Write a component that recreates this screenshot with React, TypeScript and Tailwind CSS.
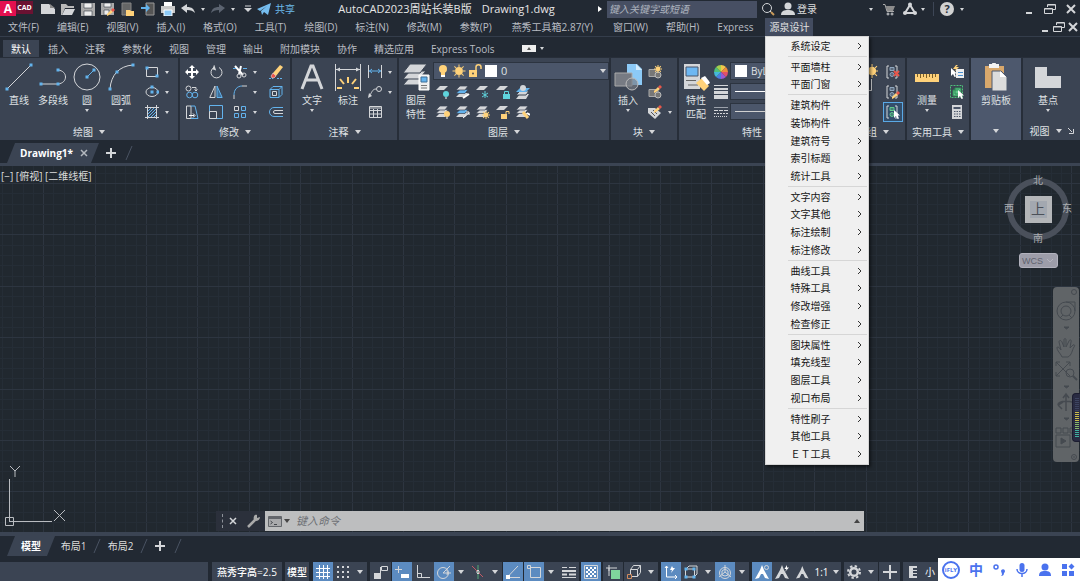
import type { ReactNode } from 'react';
import clsx from 'clsx';

const G = '#d4d6d9';
const B = '#63b3ed';
const Y = '#ffd27a';

interface IconProps {
  w?: number;
  h?: number;
  children: ReactNode;
}

function Icon({ w = 14, h = 14, children }: IconProps) {
  return (
    <svg width={w} height={h} viewBox={`0 0 ${w} ${h}`} fill="none" stroke={G} className="block shrink-0" aria-hidden="true">
      {children}
    </svg>
  );
}

function Caret({ big = false }: { big?: boolean }) {
  return big ? (
    <Icon w={6} h={4}><path d="M0 0h6L3 4z" fill={G} stroke="none" /></Icon>
  ) : (
    <Icon w={4} h={3}><path d="M0 0h4L2 3z" fill={G} stroke="none" /></Icon>
  );
}

function Tool({ label, children, className }: { label: string; children: ReactNode; className?: string }) {
  return (
    <button type="button" aria-label={label} className={clsx('flex items-center justify-center shrink-0', className || 'w-5 h-5')}>
      {children}
    </button>
  );
}

function BigTool({ lines, icon, caret, className }: { lines: string[]; icon: ReactNode; caret?: boolean; className?: string }) {
  return (
    <button type="button" className={clsx('flex flex-col items-center shrink-0 pt-px whitespace-nowrap', className || 'w-[34px]')}>
      <span className="h-7 mb-0.5 flex items-start">{icon}</span>
      {lines.map((l) => <span key={l} className="leading-[14px]">{l}</span>)}
      {caret && <span className="pt-0.5"><Caret /></span>}
    </button>
  );
}

function Panel({ title, children, className, extra }: { title: string; children: ReactNode; className: string; extra?: ReactNode }) {
  return (
    <section className={clsx('flex flex-col pt-1', className)}>
      <div className="flex h-[60px]">{children}</div>
      <button type="button" aria-label={title || '剪贴板面板'} className="flex items-center justify-center gap-1.5 pt-px h-[19px] leading-4">
        {title}
        <Caret big />
        {extra}
      </button>
    </section>
  );
}

/* ---------- shared drawing parts ---------- */

function Sheets({ mid = G }: { mid?: string }) {
  return (
    <g stroke="none">
      <path d="M4 8h8l-3 4H0z" fill={G} />
      <path d="M4 4.500h8l-3 4H0z" fill={mid} stroke="#3b4453" strokeWidth=".7" />
      <path d="M4 1h8L9 5H0z" fill={G} stroke="#3b4453" strokeWidth=".7" />
    </g>
  );
}

const Sheet = () => <path d="M4 1h8L8 5H0z" fill={G} stroke="none" />;

function Sun({ x, y, r }: { x: number; y: number; r: number }) {
  return (
    <g transform={`translate(${x} ${y})`} stroke={Y}>
      <circle r={r * 0.6} fill={Y} stroke="none" />
      {[0, 45, 90, 135, 180, 225, 270, 315].map((a) => (
        <path key={a} d={`M0 ${-r * 0.6}V${-r}`} transform={`rotate(${a})`} />
      ))}
    </g>
  );
}

const Pencil = ({ x, y }: { x: number; y: number }) => (
  <g transform={`translate(${x} ${y})`} stroke="none">
    <path d="M0 6L4 2l2 2-4 3-2 1z" fill={Y} />
    <path d="M4 2l2-2 2 2-2 2z" fill="#e8564a" />
  </g>
);

const Cursor = ({ x, y }: { x: number; y: number }) => (
  <path transform={`translate(${x} ${y})`} d="M0 0v8l2-2 1.500 3L5 8.500 3.800 5.500H6z" fill="#fff" stroke="none" />
);

const Dot = ({ x, y }: { x: number; y: number }) => <rect x={x - 1.5} y={y - 1.5} width="3" height="3" fill={B} stroke="none" />;

/* ---------- title bar ---------- */

function WindowButtons({ className }: { className: string }) {
  return (
    <div className={clsx('flex items-center', className)}>
      <Tool label="最小化" className="w-3.5 h-4"><Icon w={8} h={12}><path d="M1 10h6" strokeWidth="2" /></Icon></Tool>
      <Tool label="还原" className="w-3.5 h-4"><Icon w={12} h={12}><path d="M3.500 4V1.500h8v5H9M.5 5.500h8v5h-8zM.5 6h8M4 2h7" /></Icon></Tool>
      <Tool label="关闭" className="w-3.5 h-4"><Icon w={10} h={12}><path d="M1 2l8 8M9 2l-8 8" strokeWidth="2" /></Icon></Tool>
    </div>
  );
}

function TitleBar() {
  return (
    <header className="flex items-center h-[18px] shrink-0 text-[#dcdcdc]">
      <div className="flex w-[33px] h-4 items-start shrink-0 font-bold">
        <span className="w-4 h-[15px] leading-[15px] text-center text-xs text-white bg-[#e3104f]">A</span>
        <span className="w-[17px] h-[13px] leading-[13px] text-center text-[7px] text-white bg-[#6b1232]">CAD</span>
      </div>
      <div className="flex items-center gap-1.5 ml-2 shrink-0">
        <Tool label="新建" className="w-3.5"><Icon><path d="M0 2h8l6 5v5H0z" fill={G} stroke="none" /><path d="M9 2v4h5z" fill="#888" stroke="none" /></Icon></Tool>
        <Tool label="打开" className="w-3.5"><Icon><path d="M0 13V2h5l2 2h6v2H4L1 13z" fill="#b8b8b8" stroke="none" /><path d="M4 7h10l-3 6H1z" fill={G} stroke="none" /></Icon></Tool>
        <Tool label="保存" className="w-3.5"><Icon><path d="M0 1h14v13H0z" fill="#aaa" stroke="none" /><path d="M3 1h8v5H3zM3 9h8v5H3z" fill="#eee" stroke="#333a45" strokeWidth=".6" /></Icon></Tool>
        <Tool label="另存为" className="w-3.5"><Icon><path d="M0 1h13v12H0z" fill="#aaa" stroke="none" /><path d="M3 1h7v4H3zM3 8h5v5H3z" fill="#eee" stroke="#333a45" strokeWidth=".6" /><Pencil x={6} y={6} /></Icon></Tool>
        <Tool label="从移动端打开" className="w-3.5"><Icon><path d="M1 1h9v12H1z" fill="#666" stroke="#858585" /><path d="M5 8h4l1 1h3v5H5z" fill={Y} stroke="none" /></Icon></Tool>
        <Tool label="保存到移动端" className="w-3.5"><Icon><path d="M5 1h8v12H5z" fill="#555" stroke="#999" /><path d="M0 5h5V2l4 4-4 4V7H0z" fill={B} stroke="none" /></Icon></Tool>
        <Tool label="打印" className="w-3.5"><Icon><path d="M3 0h8v4H3z" fill="#fff" stroke="none" /><path d="M0 4h14v7H0z" fill="#c8c8c8" stroke="none" /><path d="M3 8h8v6H3z" fill="#8ccaf7" stroke="#fff" /></Icon></Tool>
        <Tool label="放弃" className="w-3.5"><Icon><path d="M0 6l6-4v3c5 0 7 2 8 6-2-2-4-3-8-3v3z" fill={G} stroke="none" /></Icon></Tool>
        <Caret />
        <Tool label="重做" className="w-3.5"><Icon><path d="M14 6L8 2v3C3 5 1 7 0 11c2-2 4-3 8-3v3z" fill="#5b6370" stroke="none" /></Icon></Tool>
        <Caret />
        <Tool label="自定义快速访问" className="w-3.5"><Icon w={8} h={8}><path d="M1 1h6" /><path d="M0 3h8L4 7z" fill={G} stroke="none" /></Icon></Tool>
      </div>
      <button type="button" className="flex items-center gap-1 ml-0.5 text-[#6cb9ea] shrink-0">
        <Icon><path d="M0 7l14-6-3 12-4-3-2 3-1-4 6-5-7 5z" fill="#75bdf0" stroke="none" /></Icon>
        共享
      </button>
      <h1 className="flex-1 flex justify-center gap-2.5 text-[11px] text-[#e6e6e6] whitespace-nowrap">
        <span>AutoCAD2023周站长装B版</span>
        <span>Drawing1.dwg</span>
      </h1>
      <Icon w={4} h={6}><path d="M0 0l4 3-4 3z" fill="#fff" stroke="none" /></Icon>
      <input aria-label="搜索" placeholder="键入关键字或短语" className="w-[150px] h-[17px] ml-[5px] px-0.5 bg-[#474f63] text-[10px] italic placeholder:text-[#aeb4bf] outline-none shrink-0" />
      <Tool label="搜索" className="w-3.5 ml-1"><Icon><circle cx="6" cy="6" r="4.500" /><path d="M9 9l2 2" /><path d="M10 10l3 3" stroke="#c99a5a" strokeWidth="2" /></Icon></Tool>
      <button type="button" className="flex items-center gap-0.5 ml-1.5 shrink-0">
        <Icon><circle cx="7" cy="4" r="3.500" fill={G} stroke="none" /><path d="M0 13c0-4 3-5 7-5s7 1 7 5z" fill={G} stroke="none" /></Icon>
        登录
        <span className="ml-[50px]"><Caret /></span>
      </button>
      <Tool label="应用商店" className="w-3 ml-2.5"><Icon w={12} h={14}><path d="M3 4h9l-2 5H4z" fill="#8c8c8c" stroke="none" /><path d="M0 2.500h2l2 7h7" stroke="#a9a9a9" /><circle cx="5" cy="12" r="1" /><circle cx="9" cy="12" r="1" /></Icon></Tool>
      <Tool label="连接" className="w-3.5 ml-2"><Icon><path d="M2 11L7 3l5 8z" strokeWidth="2" /><g fill={G} stroke="none"><circle cx="7" cy="2.500" r="2" /><circle cx="2" cy="11" r="2" /><circle cx="12" cy="11" r="2" /></g></Icon></Tool>
      <span className="ml-1"><Caret /></span>
      <span className="ml-2 w-px h-[14px] bg-[#3d4656]" />
      <Tool label="帮助" className="w-3.5 ml-1.5">
        <span className="w-3.5 h-3.5 rounded-full bg-[#d2d2d2] text-[#2a313c] text-[11px] leading-[14px] font-bold">?</span>
      </Tool>
      <span className="ml-1.5 mr-[58px]"><Caret /></span>
      <WindowButtons className="gap-[7px] mr-0.5" />
    </header>
  );
}

/* ---------- menu bar ---------- */

const menus = ['文件(F)', '编辑(E)', '视图(V)', '插入(I)', '格式(O)', '工具(T)', '绘图(D)', '标注(N)', '修改(M)', '参数(P)', '燕秀工具箱2.87(Y)', '窗口(W)', '帮助(H)', 'Express'];

const menuGroups = [
  ['系统设定'],
  ['平面墙柱', '平面门窗'],
  ['建筑构件', '装饰构件', '建筑符号', '索引标题', '统计工具'],
  ['文字内容', '文字其他', '标注绘制', '标注修改'],
  ['曲线工具', '特殊工具', '修改增强', '检查修正'],
  ['图块属性', '填充线型', '图层工具', '视口布局'],
  ['特性刷子', '其他工具', 'ＥＴ工具'],
];

function DropMenu() {
  return (
    <div role="menu" className="absolute z-20 left-0 top-full flex flex-col w-[104px] h-[429px] pb-px bg-[#f0f0f0] border border-[#d5d5d5] text-[#151515] shadow-[2px_2px_3px_rgba(0,0,0,0.5)]">
      {menuGroups.map((group, gi) => (
        <div key={group[0]} className="contents">
          {gi > 0 && <div role="separator" className="h-px shrink-0 my-px ml-[22px] mr-px bg-[#d6d6d6]" />}
          {group.map((label) => (
            <button key={label} type="button" role="menuitem" className="flex flex-1 items-center justify-between pl-6 pr-1.5">
              <span className="leading-4">{label}</span>
              <Icon w={5} h={8}><path d="M1 1l3 3-3 3" stroke="#333" /></Icon>
            </button>
          ))}
        </div>
      ))}
    </div>
  );
}

function MenuBar() {
  return (
    <nav className="flex items-center h-[19px] gap-0.5 shrink-0 border-b border-[#343d4b] text-[#b9bdc3] whitespace-nowrap">
      {menus.map((m) => <button key={m} type="button" className={m.length > 8 ? 'px-2.5' : 'px-2'}>{m}</button>)}
      <div className="relative self-stretch ml-0.5">
        <button type="button" className="h-full px-1 w-12 bg-[#434c60] text-[#e0e0e0]">源泉设计</button>
        <DropMenu />
      </div>
      <WindowButtons className="ml-auto" />
    </nav>
  );
}

/* ---------- ribbon ---------- */

const tabs = ['默认', '插入', '注释', '参数化', '视图', '管理', '输出', '附加模块', '协作', '精选应用', 'Express Tools'];

function RibbonTabs() {
  return (
    <div role="tablist" className="flex items-end h-5 pl-[3px] gap-px shrink-0 text-[#b9bdc3] whitespace-nowrap">
      {tabs.map((t, i) => (
        <button key={t} type="button" role="tab" aria-selected={i === 0} className={clsx('h-[17px] px-2', i === 0 && 'bg-[#3b4453] text-white')}>
          {t}
        </button>
      ))}
      <button type="button" aria-label="最小化功能区" className="flex items-center gap-1 h-[17px] ml-[18px]">
        <Icon w={14} h={7}><path d="M0 0h14v7H0z" fill="#eee" stroke="none" /><path d="M5 5l2-3 2 3z" fill="#555" stroke="none" /></Icon>
        <Caret />
      </button>
    </div>
  );
}

function DrawPanel() {
  return (
    <Panel title="绘图" className="w-[178px] bg-[#3b4453]">
      <div className="flex pl-0.5">
        <BigTool lines={['直线']} icon={<Icon w={28} h={28}><path d="M2 26L26 2" /><Dot x={2} y={26} /><Dot x={26} y={2} /></Icon>} />
        <BigTool lines={['多段线']} icon={<Icon w={28} h={28}><path d="M1 21h18c10-1 10-13 0-14" /><Dot x={2} y={21} /><Dot x={19} y={21} /><Dot x={19} y={7} /></Icon>} />
        <BigTool caret lines={['圆']} icon={<Icon w={28} h={28}><circle cx="14" cy="14" r="13" /><path d="M14 14l7-7" stroke={B} /><Dot x={14} y={14} /><Dot x={21} y={7} /></Icon>} />
        <BigTool caret lines={['圆弧']} icon={<Icon w={28} h={28}><path d="M3 26C4 12 12 3 26 2" /><Dot x={3} y={26} /><Dot x={10} y={9} /><Dot x={26} y={2} /></Icon>} />
      </div>
      <div className="ml-1">
        <div className="flex items-center">
          <Tool label="矩形"><Icon><path d="M1.500 2.500h11v9h-11z" /><Dot x={2} y={3} /><Dot x={12} y={11} /></Icon></Tool>
          <Tool label="矩形选项" className="w-2.5 h-5"><Caret /></Tool>
        </div>
        <div className="flex items-center">
          <Tool label="椭圆"><Icon><ellipse cx="7" cy="7" rx="6" ry="4.500" /><Dot x={7} y={7} /><Dot x={13} y={7} /><Dot x={7} y={2} /></Icon></Tool>
          <Tool label="椭圆选项" className="w-2.5 h-5"><Caret /></Tool>
        </div>
        <div className="flex items-center">
          <Tool label="图案填充"><Icon><path d="M3 6l3-3M3 9l6-6M3 12l8-8M6 12l5-5M9 12l2-2" stroke={B} /><path d="M0 2.500h14M0 12.500h14M2.500 0v14M11.500 0v14" /></Icon></Tool>
          <Tool label="填充选项" className="w-2.5 h-5"><Caret /></Tool>
        </div>
      </div>
    </Panel>
  );
}

function ModifyPanel() {
  const cell = 'flex h-5 items-center pl-0.5';
  return (
    <Panel title="修改" className="w-[110px] bg-[#3b4453]">
      <div className="grid grid-cols-[24px_24px_36px_24px]">
        <div className={cell}><Tool label="移动"><Icon><path d="M7 1v12M1 7h12" strokeWidth="2" stroke="#fff" /><path d="M7 0l3 3H4zM7 14l3-3H4zM0 7l3-3v6zM14 7l-3-3v6z" fill="#fff" stroke="none" /></Icon></Tool></div>
        <div className={cell}><Tool label="旋转"><Icon><path d="M10 2.500a5.500 5.500 0 1 1-5 0" /><path d="M4 0v5h4z" fill={G} stroke="none" transform="rotate(20 6 3)" /></Icon></Tool></div>
        <div className={cell}>
          <Tool label="修剪"><Icon><path d="M2 1l8 9M8 1L6 9" stroke="#fff" strokeWidth="2" /><circle cx="6" cy="11" r="2" /><circle cx="11" cy="10" r="2" /><path d="M0 3.500h3M10 3.500h4" stroke={B} /></Icon></Tool>
          <Tool label="修剪选项" className="w-2.5 h-5"><Caret /></Tool>
        </div>
        <div className={cell}><Tool label="删除"><Icon><path d="M4 8l7-8 3 2-7 9z" fill={Y} stroke="none" /><path d="M4 8l3 3-2 2H3L2 11z" fill="#e8564a" stroke="#fff" strokeWidth=".5" /><path d="M0 13.500h4M8 13.500h5" stroke={B} strokeDasharray="2 1" /></Icon></Tool></div>

        <div className={cell}><Tool label="复制"><Icon><circle cx="3.500" cy="3.500" r="2.500" /><circle cx="4.500" cy="10" r="2.800" stroke={B} /><circle cx="10" cy="10" r="2.800" stroke={B} /><path d="M7 2.500h4V6M9.500 4.500L11 6l1.500-1.500" /></Icon></Tool></div>
        <div className={cell}><Tool label="镜像"><Icon><path d="M6 1v11.500H.8z" /><path d="M8 1v11.500h5.200z" stroke={B} fill="#3f6f98" /></Icon></Tool></div>
        <div className={cell}>
          <Tool label="圆角"><Icon><path d="M1 14v-4M9 1h5" /><path d="M1 10c0-5 3-9 8-9" stroke={B} /></Icon></Tool>
          <Tool label="圆角选项" className="w-2.5 h-5"><Caret /></Tool>
        </div>
        <div className={cell}><Tool label="分解"><Icon><path d="M1 4.500h9v8H1zM10 4.500l3-3v8l-3 3" stroke={B} /><path d="M1 4.500l3-3h9" stroke={B} /><path d="M3.500 6.500h4v4h-4z" /></Icon></Tool></div>

        <div className={cell}><Tool label="拉伸"><Icon><path d="M1.500 1v12.500H6V1z" /><path d="M6 1h4l3 12.500H6" stroke={B} /><path d="M4 10.500h5M8 8.500l2 2-2 2" stroke="#fff" /></Icon></Tool></div>
        <div className={cell}><Tool label="缩放"><Icon><path d="M.5.5h13v13H.5z" stroke={B} /><path d="M.5 6.500h7v7h-7z" /></Icon></Tool></div>
        <div className={cell}>
          <Tool label="阵列"><Icon><path d="M1.500 1.500h4v4h-4z" /><path d="M8.500 1.500h4v4h-4zM1.500 8.500h4v4h-4zM8.500 8.500h4v4h-4z" stroke={B} /></Icon></Tool>
          <Tool label="阵列选项" className="w-2.5 h-5"><Caret /></Tool>
        </div>
        <div className={cell}><Tool label="偏移"><Icon><path d="M14 2.500H5a4.500 4.500 0 0 0 0 9h9" stroke={B} /><path d="M14 5.500H6a1.500 1.500 0 0 0 0 3h8" /></Icon></Tool></div>
      </div>
    </Panel>
  );
}

function AnnotatePanel() {
  return (
    <Panel title="注释" className="w-[105px] bg-[#3b4453]">
      <BigTool className="w-10" caret lines={['文字']} icon={<Icon w={24} h={28}><path d="M2 26l9-23h2l9 23M5 17h14" strokeWidth="3" /></Icon>} />
      <BigTool
        className="w-8"
        lines={['标注']}
        icon={
          <Icon w={28} h={28}>
            <path d="M1.500 1v27M26.500 1v27M2 6.500h24" />
            <path d="M2 6.500l4-2v4zM26 6.500l-4-2v4z" fill={G} stroke="none" />
            <path d="M14 20v-6M10 21l-4-5M18 21l4-5M8 25H3M20 25h5" stroke={Y} strokeWidth="2" />
          </Icon>
        }
      />
      <div>
        <div className="flex items-center">
          <Tool label="线性" className="w-[22px] h-5"><Icon><path d="M.5 0v13M13.500 0v13" /><path d="M1 6h12M4 4L1.500 6 4 8M10 4l2.500 2L10 8" stroke={B} /></Icon></Tool>
          <Tool label="线性选项" className="w-2 h-5"><Caret /></Tool>
        </div>
        <div className="flex items-center">
          <Tool label="引线" className="w-[22px] h-5"><Icon><circle cx="11" cy="4" r="2.500" /><path d="M8 4c-4 0-4 4-7 7" /><path d="M0 13l1-5 3 3z" fill={G} stroke="none" /></Icon></Tool>
          <Tool label="引线选项" className="w-2 h-5"><Caret /></Tool>
        </div>
        <Tool label="表格" className="w-[22px] h-5"><Icon><path d="M1.500 1.500h12v11h-12zM1.500 5.500h12M1.500 9h12M5.500 4v8M9.500 4v8M1 3h13" /></Icon></Tool>
      </div>
    </Panel>
  );
}

function LayerPanel() {
  return (
    <Panel title="图层" className="w-[210px] bg-[#3b4453]">
      <BigTool
        lines={['图层', '特性']}
        icon={
          <Icon w={28} h={28}>
            <g fill={G} stroke="#3b4453">
              <path d="M8 14h16l-7 8H1z" />
              <path d="M8 8h16l-7 8H1z" />
              <path d="M8 1h17l-7 9H1z" />
            </g>
            <path d="M17 12h10v15H17z" fill="#eee" stroke="#fff" />
            <path d="M19 14h6v5h-6z" fill={B} stroke="#3f6f98" />
            <path d="M19 22.500h6M19 25h6" stroke="#777" />
          </Icon>
        }
      />
      <div className="flex-1 min-w-0">
        <div className="flex items-center h-[18px] pl-0.5 gap-0.5 bg-[#4b566a] border border-[#2c3440]">
          <Icon><circle cx="7" cy="5" r="4" fill={Y} stroke="none" /><path d="M5 8h4v3H5z" fill={Y} stroke="none" /><path d="M5 12h4" stroke="#fff" strokeWidth="2" /></Icon>
          <Icon><Sun x={7} y={7} r={6.5} /></Icon>
          <Icon><path d="M1 6h8v7H1z" fill={Y} stroke="none" /><path d="M8 6V3c0-3 5-3 5 0v2" stroke={Y} strokeWidth="1.500" /><circle cx="5" cy="9.500" r="1" fill="#555" stroke="none" /></Icon>
          <span className="w-3 h-3 ml-px bg-white" />
          <select aria-label="图层" className="flex-1 min-w-0 ml-0.5 appearance-none bg-transparent text-[11px] outline-none"><option>0</option></select>
          <span className="mr-0.5"><Caret big /></span>
        </div>
        <div className="flex pt-0.5">
          <Tool label="关闭图层"><Icon><Sheet /><circle cx="10" cy="9" r="3" fill="#5fd3dc" stroke="none" /><path d="M9 13h2" stroke="#fff" /></Icon></Tool>
          <Tool label="置为当前"><Icon><Sheets mid={B} /><path d="M7 13l6-4" stroke="#fff" strokeWidth="2" /></Icon></Tool>
          <Tool label="冻结"><Icon><Sheet /><path d="M9 6v7M6 8l6 4M12 8l-6 4" stroke="#5fd3dc" /></Icon></Tool>
          <Tool label="锁定"><Icon><Sheet /><path d="M7 9h7v5H7z" fill="#5fd3dc" stroke="none" /><path d="M8.500 9V6.500h4V9" stroke="#5fd3dc" /></Icon></Tool>
          <Tool label="匹配图层"><Icon><path d="M4 9h9l-3 5H0z" fill={G} stroke="none" /><path d="M4 6h9l-3 4H0z" fill={G} stroke="#3b4453" /><path d="M4 3h10l-4 4H0z" fill={B} stroke="none" /><circle cx="7" cy="3" r="3" fill={G} stroke="none" /></Icon></Tool>
        </div>
        <div className="flex">
          <Tool label="打开所有图层"><Icon><Sheets /><circle cx="11" cy="9" r="3" fill={Y} stroke="none" /><path d="M10 13h2" stroke="#fff" /></Icon></Tool>
          <Tool label="上一个"><Icon><Sheets mid={B} /><path d="M7 13l6-5M10 7h3v3" stroke="#fff" /></Icon></Tool>
          <Tool label="解冻"><Icon><Sheets /><Sun x={10} y={10} r={4} /></Icon></Tool>
          <Tool label="解锁"><Icon><Sheet /><path d="M5 9h6v5H5z" fill={Y} stroke="none" /><path d="M10 9V6.500h3V9" stroke={Y} /></Icon></Tool>
          <Tool label="更改为当前图层"><Icon><Sheets /><path d="M7 7l5 6" stroke={Y} strokeWidth="3" /><path d="M11 8l3 2" stroke="#fff" strokeWidth="2" /></Icon></Tool>
        </div>
      </div>
    </Panel>
  );
}

const BlockMini = () => (
  <g><path d="M1 4.500h9v7H1z" fill="#777" stroke="#aaa" /><circle cx="10" cy="10" r="3" fill="#777" stroke="#bbb" /></g>
);

function BlockPanel() {
  return (
    <Panel title="块" className="w-[66px] bg-[#3b4453]">
      <BigTool
        caret
        lines={['插入']}
        icon={
          <Icon w={28} h={28}>
            <path d="M13 1h10l5 5v16H13z" fill="#8ccaf7" stroke="none" />
            <path d="M22 1v6h6z" fill="#d5ecfc" stroke="none" />
            <path d="M1 10h17v13H1z" fill="#777b83" stroke="#aaa" />
            <circle cx="18" cy="21" r="6" fill="#777b83aa" stroke="#bbb" />
          </Icon>
        }
      />
      <div>
        <Tool label="创建块"><Icon><BlockMini /><Sun x={10} y={4} r={4} /></Icon></Tool>
        <Tool label="编辑块"><Icon><BlockMini /><Pencil x={6} y={0} /></Icon></Tool>
        <div className="flex items-center">
          <Tool label="编辑属性"><Icon><path d="M0 3h7l6 5-6 6-7-6z" fill={G} stroke="none" /><path d="M3 7l4 4M5 5l4 4" stroke="#555" /><Pencil x={6} y={0} /></Icon></Tool>
          <Tool label="属性选项" className="w-2.5 h-5"><Caret /></Tool>
        </div>
      </div>
    </Panel>
  );
}

const wheel = ['#f2c84b', '#f08a3c', '#e2506b', '#9b59d0', '#4a7de0', '#45b8d8', '#4fc07a', '#a4d14c'];

function PropertyPanel() {
  return (
    <Panel title="特性" className="w-[158px] bg-[#3b4453]">
      <BigTool
        lines={['特性', '匹配']}
        icon={
          <Icon w={28} h={28}>
            <path d="M2 1h16v25H2z" fill={G} stroke="none" />
            <path d="M4 4h12v9H4z" fill="#6db7f2" stroke="#4a5568" />
            <path d="M4 17.500h10M6 22h10" stroke="#666" />
            <path d="M14 20l6-5 7 8-5 5z" fill={Y} stroke="none" />
            <path d="M19 15l4-2 4 5 1 2-3 2z" fill="#fff" stroke="none" />
          </Icon>
        }
      />
      <div className="w-[17px]">
        <Tool label="颜色" className="w-4 h-5">
          <Icon>
            {wheel.map((c, i) => <path key={c} d="M7 7V0A7 7 0 0 1 11.950 2.050z" fill={c} stroke="none" transform={`rotate(${i * 45} 7 7)`} />)}
          </Icon>
        </Tool>
        <Tool label="线宽" className="w-4 h-5"><Icon><path d="M0 .5h14" /><path d="M0 4h14" strokeWidth="2" /><path d="M0 7.500h14" strokeWidth="3" /><path d="M0 12h14" strokeWidth="4" /></Icon></Tool>
        <Tool label="线型" className="w-4 h-5"><Icon><path d="M0 2.500h14" stroke="#9ba1ab" /><path d="M0 5.500h14" strokeDasharray="4 1" /><path d="M0 8.500h14" strokeDasharray="2 1" /><path d="M0 11.500h14" strokeDasharray="1 1" /></Icon></Tool>
      </div>
      <div className="flex-1 min-w-0 flex flex-col gap-[3px] mr-1">
        <div className="flex items-center h-[18px] pl-1 gap-1 bg-[#4b566a] border border-[#2c3440]">
          <span className="w-3 h-3 bg-white" />
          <select aria-label="对象颜色" className="flex-1 min-w-0 appearance-none bg-transparent outline-none"><option>ByLayer</option></select>
        </div>
        <div className="flex items-center h-[17px] pl-1 bg-[#4b566a] border border-[#2c3440]"><span className="flex-1 h-px bg-white" /></div>
        <div className="flex items-center h-[17px] pl-1 bg-[#4b566a] border border-[#2c3440]"><span className="flex-1 h-px bg-[#d0d0d0]" /></div>
      </div>
    </Panel>
  );
}

const GroupMini = ({ c = '#8fa7bf' }: { c?: string }) => (
  <g><path d="M3 1H1v12h2M9 1h2v12H9" /><path d="M4 2.500h4v3H4z" stroke={c} fill={c} fillOpacity=".4" /><circle cx="6" cy="9.500" r="2" stroke={c} fill={c} fillOpacity=".4" /></g>
);

function GroupPanel() {
  return (
    <Panel title="组" className="w-[66px] pl-3 bg-[#3b4453]">
      <BigTool
        className="w-[26px]"
        lines={['组']}
        icon={<Icon w={28} h={28}><path d="M4 6H1v20h3M17 27.500h4.500V16" /><path d="M5 9h9v9H5z" fill="#888" /><Sun x={22} y={8} r={7} /></Icon>}
      />
      <div className="ml-1.5">
        <Tool label="解除编组"><Icon><GroupMini /><path d="M8 6l5 5M13 6l-5 5" stroke="#e8564a" strokeWidth="2" /></Icon></Tool>
        <Tool label="组编辑"><Icon><GroupMini /><Pencil x={6} y={6} /></Icon></Tool>
        <Tool label="启用编组选择" className="w-5 h-5 bg-[#334e6b] border border-[#5aa9e6]"><Icon><GroupMini c="#5fc98a" /><Cursor x={8} y={5} /></Icon></Tool>
      </div>
    </Panel>
  );
}

function Ribbon() {
  return (
    <div className="flex gap-0.5 h-[83px] pt-px shrink-0 bg-[#272e39] text-[#dfe1e4]">
      <DrawPanel />
      <ModifyPanel />
      <AnnotatePanel />
      <LayerPanel />
      <BlockPanel />
      <PropertyPanel />
      <GroupPanel />
      <Panel title="实用工具" className="w-[62px] bg-[#3b4453]">
        <BigTool caret className="w-10" lines={['测量']} icon={<Icon w={24} h={28}><path d="M0 11h24v8H0z" fill={Y} stroke="none" /><path d="M2.500 11v3M5.500 11v4M8.500 11v3M11.500 11v4M14.500 11v3M17.500 11v4M20.500 11v3" stroke="#7a6028" /></Icon>} />
        <div>
          <Tool label="快速选择"><Icon><path d="M6 4h8v9H6z" fill="#eee" stroke="none" /><path d="M8 7.500h5M8 10.500h5" stroke="#4a90d0" /><Cursor x={1} y={3} /><path d="M6 0L3 4h3L4 7l5-5H6l2-2z" fill={Y} stroke="none" /></Icon></Tool>
          <Tool label="全部选择"><Icon><path d="M.5.5h12v12H.5z" stroke="#4fc07a" strokeDasharray="2 1" /><path d="M3 5h6v6H3zM5 3h6v6H5z" fill="#5fc98a" stroke="#2f8a55" /><Cursor x={8} y={5} /></Icon></Tool>
          <Tool label="快速计算器"><Icon><path d="M2 0h10v14H2z" fill={G} stroke="none" /><path d="M3.500 2h7v2h-7z" fill="#4a5568" stroke="none" /><path d="M4 6.500h7M4 9h7M4 11.500h7" stroke="#4a5568" strokeDasharray="1.500 1" /></Icon></Tool>
        </div>
      </Panel>
      <Panel title="" className="w-[50px] bg-[#4d586d]">
        <BigTool
          className="w-full"
          lines={['剪贴板']}
          icon={
            <Icon w={24} h={28}>
              <path d="M1 3h19v22H1z" fill="#d9a86c" stroke="none" />
              <path d="M5 1h3c0-2 4-2 4 0h3v4H5z" fill="#f3f3f3" stroke="none" />
              <path d="M8 8h9l6 6v14H8z" fill="#dcdcdc" stroke="#4d586d" />
              <path d="M16 8v6h6z" fill="#fff" stroke="none" />
            </Icon>
          }
        />
      </Panel>
      <Panel title="视图" className="flex-1 min-w-0 bg-[#3b4453]" extra={<Icon w={6} h={6}><path d="M0 0l4 4M5.500 1v4.500H1" /></Icon>}>
        <BigTool caret className="w-[50px]" lines={['基点']} icon={<Icon w={28} h={28}><path d="M1 4h12v9h14v12H1z" fill={G} stroke="none" /></Icon>} />
      </Panel>
    </div>
  );
}

/* ---------- drawing area ---------- */

const Slash = () => <Icon w={8} h={14}><path d="M1 14L7 0" stroke="#4a5362" /></Icon>;
const Plus = () => <Icon w={10} h={10}><path d="M5 0v10M0 5h10" strokeWidth="2" /></Icon>;

function FileTabs() {
  return (
    <div className="flex items-end h-[26px] shrink-0 border-b-[3px] border-[#3b4453]">
      <div className="flex items-center gap-1.5 h-5 ml-[7px] pl-[13px] pr-2.5 bg-[#3b4453] text-white font-bold [clip-path:polygon(8px_0,100%_0,calc(100%-8px)_100%,0_100%)]">
        <button type="button">Drawing1*</button>
        <Tool label="关闭文件" className="w-2.5 h-5"><Icon w={8} h={8}><path d="M1 1l6 6M7 1L1 7" stroke="#b4b8be" strokeWidth="1.500" /></Icon></Tool>
      </div>
      <Tool label="新图形" className="w-5 h-5 ml-0.5"><Plus /></Tool>
      <span className="mb-[3px] ml-1"><Slash /></span>
    </div>
  );
}

function Grid() {
  const lines = Array.from({ length: 300 }, (_, i) => i);
  return (
    <svg className="absolute inset-0 w-full h-full" aria-hidden="true" shapeRendering="crispEdges">
      {lines.map((i) => {
        const x = 2 + Math.round(i * 10.28 - 10.28);
        return <path key={`v${i}`} d={`M${x + 0.5} 0v2000`} stroke={i % 5 === 0 ? '#2d3540' : '#252d36'} />;
      })}
      {lines.map((i) => {
        const y = 17 + Math.round(i * 10.28 - 51.4);
        return <path key={`h${i}`} d={`M0 ${y + 0.5}h4000`} stroke={i % 5 === 0 ? '#2d3540' : '#252d36'} />;
      })}
    </svg>
  );
}

function ViewCube() {
  return (
    <div className="absolute right-2 top-2 w-[68px] text-[#a9acb0]">
      <div className="relative h-[70px]">
        <svg width="68" height="70" viewBox="0 0 68 70" className="block" aria-hidden="true">
          <circle cx="34" cy="35" r="28" fill="none" stroke="#4a505b" strokeWidth="6" />
          <path d="M21 22h27v27H21z" fill="#b4b6b9" />
          <path d="M26 27h17v17H26z" fill="#a3a8b0" />
        </svg>
        <button type="button" className="absolute inset-0 m-auto w-6 h-6 text-sm leading-6 text-[#4b5058]">上</button>
        <span className="absolute inset-x-0 top-0 text-center leading-3">北</span>
        <span className="absolute inset-x-0 bottom-0 text-center leading-3">南</span>
        <span className="absolute left-0 top-7 leading-3">西</span>
        <span className="absolute right-0 top-7 leading-3">东</span>
      </div>
      <button type="button" className="flex items-center justify-center gap-1 w-[39px] h-[15px] mx-auto mt-[9px] rounded-[3px] border border-[#b2b2bd] bg-[#9d9da9] text-[9px] text-[#60636f] font-['Liberation_Sans']">
        WCS
        <Icon w={7} h={4}><path d="M0 0l3 3 3-3" stroke="#b4b4be" /></Icon>
      </button>
    </div>
  );
}

function NavBar() {
  const s = '#454a50';
  return (
    <div className="absolute right-px top-[121px] flex flex-col items-center w-[26px] h-[175px] rounded-sm bg-[#606467]">
      <svg width="26" height="175" viewBox="0 0 26 175" fill="none" stroke={s} aria-hidden="true">
        <circle cx="21" cy="5" r="2.500" />
        <circle cx="13" cy="24" r="9" /><circle cx="13" cy="24" r="5" /><path d="M13 15h9v9M7 31l3-3M19 31l-3-3" />
        <path d="M11 40h5l-2.500 2z" fill={s} />
        <path d="M8 68c-2-3-4-5-4-7s2-1 4 2l-2-8c0-2 2-2 3 0l2 5V53c0-2 2-2 2 0v7l3-6c1-2 3-1 2 1l-1 6 3-3c2-1 2 1 1 2-2 3-2 8-6 10H9z" />
        <path d="M3 75l14 14M17 75L3 89M3 79v-4h4M13 75h4v4M3 85v4h4" /><circle cx="17" cy="86" r="4" /><path d="M20 89l4 4" strokeWidth="2" />
        <path d="M11 99h5l-2.500 2z" fill={s} />
        <path d="M13 124v-16M10 111l3-4 3 4M5 118c0-5 16-5 17 0M5 118l5-3M5 118l4 4" strokeWidth="1.500" />
        <path d="M11 131h5l-2.500 2z" fill={s} />
        <path d="M3 141h5v5H3zM10 141h5v5h-5zM17 141h5v5h-5zM3 148h14v12H3z" /><path d="M8 151l5 3-5 3z" fill={s} />
        <circle cx="21" cy="170" r="2.500" /><path d="M20 170h2" />
      </svg>
    </div>
  );
}

function SideMeter() {
  const bars = Array.from({ length: 13 }, (_, i) => i);
  return (
    <div className="absolute right-0 top-[227px] w-2 h-[49px] rounded-l-sm bg-[#292b42] border border-r-0 border-[#1c1d30]">
      <svg width="7" height="47" viewBox="0 0 7 47" aria-hidden="true">
        {[4, 6, 8, 10, 12, 14, 16].map((y) => <path key={y} d={`M2 ${y}h4v1H2z`} fill="#3d4460" />)}
        {bars.map((i) => <path key={i} d={`M2 ${18 + i * 2}h4v1H2z`} fill={i < 5 ? '#c9bd4a' : i < 9 ? '#86b86a' : '#3fae9e'} />)}
      </svg>
    </div>
  );
}

function CommandLine() {
  return (
    <div className="absolute left-[20%] bottom-px flex items-center w-[60%] h-5 bg-[#2b303b]">
      <span className="h-3.5 ml-1.5 border-l border-dashed border-[#8d9199]" />
      <Tool label="关闭命令行" className="w-5 h-5"><Icon w={8} h={8}><path d="M1 1l6 6M7 1L1 7" strokeWidth="1.500" /></Icon></Tool>
      <Tool label="自定义" className="w-[22px] h-5"><Icon><path d="M1 13l7-7" stroke="#aaa" strokeWidth="2.500" /><path d="M13 3l-3 1 0-3C7 0 6 4 7 6s6 1 6-3z" fill="#aaa" stroke="none" /></Icon></Tool>
      <label className="flex flex-1 items-center h-full bg-[#bdbebf] pl-[3px] pr-1">
        <Icon w={14} h={11}><path d="M.5.5h13v10H.5z" fill="#a9aaac" stroke="#63666b" /><path d="M1 2h12" stroke="#63666b" strokeWidth="2" /><path d="M2.500 5l2 1.500-2 1.500M6 8.500h3" stroke="#44474c" /></Icon>
        <svg width="6" height="4" className="ml-0.5" aria-hidden="true"><path d="M0 0h6L3 4z" fill="#444" /></svg>
        <input aria-label="命令" placeholder="键入命令" className="flex-1 min-w-0 ml-1.5 bg-transparent text-[11px] italic placeholder:text-[#6d7075] outline-none" />
        <svg width="6" height="4" aria-hidden="true"><path d="M0 4h6L3 0z" fill="#444" /></svg>
      </label>
    </div>
  );
}

function Canvas() {
  return (
    <main className="relative flex-1 overflow-hidden bg-[#21282f]">
      <Grid />
      <div className="relative pt-[3px] pl-px leading-[15px] text-[#dcdcdc]">[−] [俯视] [二维线框]</div>
      <svg width="70" height="64" viewBox="0 0 70 64" className="absolute left-0 bottom-1" fill="none" stroke="#b9bcc0" aria-hidden="true">
        <path d="M5.500 53.500h8v8h-8zM9.500 57.500V15M9.500 57.500H52M9.500 53v4.500H14" />
        <path d="M10 2l5 5 5-5M15 7v6M54 46l11 11M65 46L54 57" />
      </svg>
      <ViewCube />
      <NavBar />
      <SideMeter />
      <CommandLine />
    </main>
  );
}

function LayoutTabs() {
  return (
    <div className="flex items-center h-[29px] pb-[5px] shrink-0 border-t-4 border-[#3b4453] text-[#dcdcdc]">
      <button type="button" className="h-5 ml-[7px] w-12 bg-[#3b4453] text-white font-bold [clip-path:polygon(8px_0,100%_0,calc(100%-8px)_100%,0_100%)]">模型</button>
      <button type="button" className="ml-[5px] w-[27px]">布局1</button>
      <span className="ml-1.5"><Slash /></span>
      <button type="button" className="ml-1.5 w-[27px]">布局2</button>
      <span className="ml-1.5"><Slash /></span>
      <Tool label="新建布局" className="w-5 h-5 ml-0.5"><Plus /></Tool>
      <span className="ml-1"><Slash /></span>
    </div>
  );
}

/* ---------- status bar ---------- */

function Stat({ label, on = false, children, className }: { label: string; on?: boolean; children: ReactNode; className?: string }) {
  return (
    <button type="button" aria-label={label} className={clsx('flex items-center justify-center h-full shrink-0', className || 'w-5', on ? 'bg-[#5c8bc0]' : 'bg-[#3b4453]')}>
      {children}
    </button>
  );
}

const More = ({ className }: { className?: string }) => <Stat label="更多选项" className={className || 'w-3.5'}><Caret big /></Stat>;

const person = 'M7 0l2 5 5 9-4-1-2-4H6l-2 4-4 1 5-9z';

function StatusBar() {
  return (
    <footer className="relative flex h-5 pt-px shrink-0 text-white">
      <div className="flex-1 min-w-0 mr-1 bg-[#3b4453]" />
      <div className="flex shrink-0">
        <Stat label="燕秀字高" className="w-[70px] mr-[3px]"><span className="font-medium whitespace-nowrap">燕秀字高=2.5</span></Stat>
        <Stat label="模型" className="w-6 mr-1"><span className="font-medium whitespace-nowrap">模型</span></Stat>
        <Stat label="栅格" on><Icon><path d="M3.500 0v14M7.500 0v14M11.500 0v14M0 3.500h14M0 7.500h14M0 11.500h14" stroke="#fff" /></Icon></Stat>
        <Stat label="捕捉"><Icon><path d="M1 2h12M1 7h12M1 12h12" strokeWidth="2" strokeDasharray="2 3" /></Icon></Stat>
        <More /><span className="w-[3px]" />
        <Stat label="推断约束" className="w-[21px] mr-px"><Icon><path d="M7.500 1.500h6v4h-6zM6.500 2v7" /><path d="M0 8h7v6H0z" fill={G} stroke="none" /></Icon></Stat>
        <Stat label="动态输入" on><Icon><path d="M3.500 1v7M0 4.500h7" /><path d="M6 9h8v4H6z" fill="#fff" stroke="none" /></Icon></Stat>
        <Stat label="正交" className="w-[22px]"><Icon><path d="M1.500 0v12.500H14M1.500 8.500h4v4" /></Icon></Stat>
        <Stat label="极轴" on><Icon><circle cx="6" cy="8" r="5.500" /><path d="M6 8h8M6 8l7-7M9 4c1 1 2 3 1 6" /></Icon></Stat>
        <More />
        <Stat label="等轴测草图"><Icon><path d="M1 1l11 11" stroke="#c25a66" /><path d="M7 0v14" stroke="#55a878" /><path d="M7 5l1 1v2l-1 1-1-1V6z" /></Icon></Stat>
        <More /><span className="w-px" />
        <Stat label="对象捕捉追踪" on className="w-5 mr-px"><Icon><path d="M14 12.500H1L12 1" /><path d="M0 10h4v4H0z" fill="#fff" stroke="none" /></Icon></Stat>
        <Stat label="对象捕捉" on><Icon><path d="M3.500 2.500h10v10h-10zM.5.5h3v3h-3z" /></Icon></Stat>
        <More />
        <Stat label="线宽" className="w-[21px] mr-0.5"><Icon><path d="M0 2.500h5M7 2.500h7M0 12.500h14" /><path d="M0 6h14" strokeWidth="2" /><path d="M0 9.500h5M7 9.500h7" strokeWidth="2" /></Icon></Stat>
        <Stat label="透明度" on className="w-5 mr-0.5"><Icon><path d="M.5.5h13v13H.5z" /><path d="M2 3h10M2 7h10M2 11h10" strokeWidth="2" strokeDasharray="2 2" stroke="#fff" /><path d="M4 5h8M4 9h8" strokeWidth="2" strokeDasharray="2 2" stroke="#fff" /></Icon></Stat>
        <Stat label="选择循环" className="w-5 mr-px"><Icon><path d="M3 0v6M0 3h11M3 3v8" /><path d="M5 5h9v9H5z" fill="#7fd69c" stroke="none" /></Icon></Stat>
        <Stat label="三维对象捕捉"><Icon><path d="M3.500 4.500h7v7h-7zM3.500 4.500l3-4h7l-3 4M13.500.5v7l-3 4" /><path d="M.5 9.500h4v4h-4z" fill="#3b4453" stroke="#d18a5c" /></Icon></Stat>
        <More /><span className="w-[3px]" />
        <Stat label="动态 UCS" on><Icon><path d="M2.500 1v11H13M1 3l1.500-2L4 3M11 10l2 2-2 2" stroke="#fff" /><path d="M8 1L6 5h2L7 8l4-5H9z" fill="#fff" stroke="none" /></Icon></Stat>
        <Stat label="选择过滤"><Icon><path d="M1.500 4h9v8h-9zM2 4l3-3h8v8l-3 3" /><Dot x={2} y={4} /><Dot x={10} y={4} /><Dot x={2} y={12} /><Dot x={10} y={12} /></Icon></Stat>
        <More />
        <Stat label="小控件" on><Icon><circle cx="7" cy="8" r="5.500" /><path d="M7 0v7M7 7L1 12M7 7l6 5M4 6l3-2 3 2v4l-3 1-3-1z" /></Icon></Stat>
        <More /><span className="w-[3px]" />
        <Stat label="注释可见性" on><Icon><path d={person} fill="#fff" stroke="none" /><circle cx="11.500" cy="2.500" r="2" /></Icon></Stat>
        <Stat label="自动缩放"><Icon><path d={person} fill={G} stroke="none" /><path d="M12 0L9.500 4h2L10 7l4-4.500h-2z" fill="#fff" stroke="none" /></Icon></Stat>
        <Stat label="注释比例"><Icon><path d={person} fill={G} stroke="none" transform="translate(1 1) scale(.9)" /></Icon></Stat>
        <Stat label="比例" className="w-[29px] mr-[3px]"><span className="flex items-center gap-1">1:1<Caret big /></span></Stat>
        <Stat label="切换工作空间"><Icon><circle cx="7" cy="7" r="3.800" strokeWidth="2.500" /><circle cx="7" cy="7" r="6" strokeWidth="2" strokeDasharray="2.400 2.300" /></Icon></Stat>
        <More /><span className="w-px" />
        <Stat label="注释监视器" className="w-[21px] mr-[3px]"><Icon><path d="M7 0v14M0 7h14" strokeWidth="2" /></Icon></Stat>
        <Stat label="单位" className="w-[19px]"><Icon w={8} h={14}><path d="M0 1h8v2H4v2h4v1H4v2h4v1H4v2h4v2H0z" fill={G} stroke="none" /></Icon></Stat>
        <Stat label="小数" className="w-4">小</Stat>
        <div className="w-[142px] bg-[#3b4453]" />
      </div>
      <div className="absolute right-0 bottom-0 flex items-center justify-between w-[142px] h-[23px] pl-1 pr-[5px] bg-white text-[#4a72ee] font-bold">
        <span className="flex items-center justify-center w-[18px] h-[18px] rounded-full border-2 border-[#4a72ee] text-[6px] leading-none">iFLY</span>
        <button type="button" className="text-sm leading-none">中</button>
        <Tool label="标点" className="w-3.5"><Icon><circle cx="4" cy="4" r="2" stroke="#4a72ee" strokeWidth="1.500" /><path d="M9 8a2 2 0 1 1 3 2c0 2-1 3-3 3 1-1 1-2 1-2z" fill="#4a72ee" stroke="none" /></Icon></Tool>
        <Tool label="语音" className="w-3.5"><Icon><rect x="4.500" y="0" width="5" height="9" rx="2.500" fill="#4a72ee" stroke="none" /><path d="M2 6c0 6 10 6 10 0M7 11v3" stroke="#4a72ee" strokeWidth="1.500" /></Icon></Tool>
        <Tool label="账户" className="w-3.5"><Icon><circle cx="7" cy="4" r="3.500" fill="#4a72ee" stroke="none" /><path d="M1 13c0-4 2-5 6-5s6 1 6 5z" fill="#4a72ee" stroke="none" /></Icon></Tool>
        <Tool label="工具箱" className="w-3.5"><Icon><path d="M1 1h5v5H1zM1 8h5v5H1zM8 8h5v5H8zM10.500.5l3 3-3 3-3-3z" fill="#4a72ee" stroke="none" /></Icon></Tool>
      </div>
    </footer>
  );
}

export default function App() {
  return (
    <div className="flex flex-col h-screen overflow-hidden bg-[#222933] text-[10px] leading-4 font-['Open_Sans','Noto_Sans_CJK_SC',sans-serif]">
      <TitleBar />
      <MenuBar />
      <RibbonTabs />
      <Ribbon />
      <FileTabs />
      <Canvas />
      <LayoutTabs />
      <StatusBar />
    </div>
  );
}
